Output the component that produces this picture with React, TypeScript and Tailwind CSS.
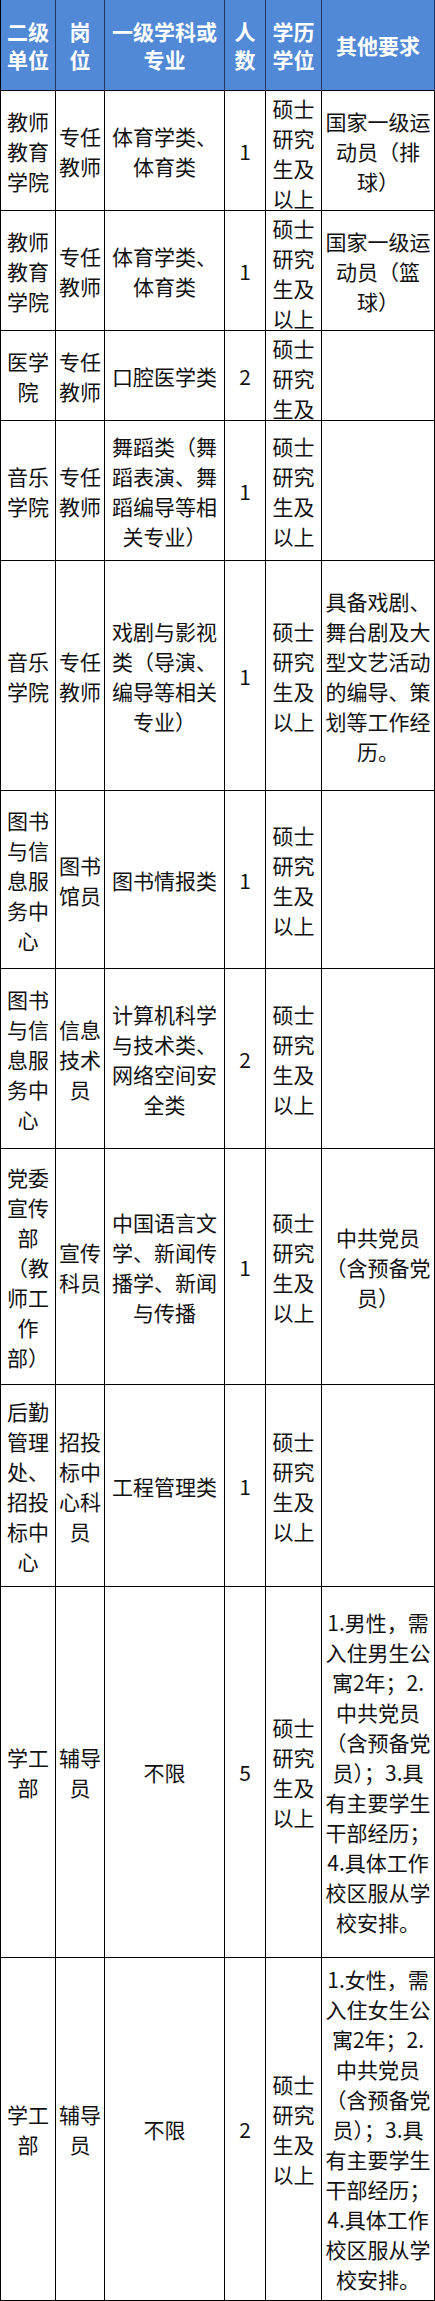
import React from 'react'

type Row = string[][]

const header: Row = [
  ['二级', '单位'],
  ['岗', '位'],
  ['一级学科或', '专业'],
  ['人', '数'],
  ['学历', '学位'],
  ['其他要求'],
]

const degree = ['硕士', '研究', '生及', '以上']

const rows: Row[] = [
  [['教师', '教育', '学院'], ['专任', '教师'], ['体育学类、', '体育类'], ['1'], degree, ['国家一级运', '动员（排', '球）']],
  [['教师', '教育', '学院'], ['专任', '教师'], ['体育学类、', '体育类'], ['1'], degree, ['国家一级运', '动员（篮', '球）']],
  [['医学', '院'], ['专任', '教师'], ['口腔医学类'], ['2'], degree, []],
  [['音乐', '学院'], ['专任', '教师'], ['舞蹈类（舞', '蹈表演、舞', '蹈编导等相', '关专业）'], ['1'], degree, []],
  [
    ['音乐', '学院'],
    ['专任', '教师'],
    ['戏剧与影视', '类（导演、', '编导等相关', '专业）'],
    ['1'],
    degree,
    ['具备戏剧、', '舞台剧及大', '型文艺活动', '的编导、策', '划等工作经', '历。'],
  ],
  [['图书', '与信', '息服', '务中', '心'], ['图书', '馆员'], ['图书情报类'], ['1'], degree, []],
  [['图书', '与信', '息服', '务中', '心'], ['信息', '技术', '员'], ['计算机科学', '与技术类、', '网络空间安', '全类'], ['2'], degree, []],
  [
    ['党委', '宣传', '部', '（教', '师工', '作', '部）'],
    ['宣传', '科员'],
    ['中国语言文', '学、新闻传', '播学、新闻', '与传播'],
    ['1'],
    degree,
    ['中共党员', '（含预备党', '员）'],
  ],
  [['后勤', '管理', '处、', '招投', '标中', '心'], ['招投', '标中', '心科', '员'], ['工程管理类'], ['1'], degree, []],
  [
    ['学工', '部'],
    ['辅导', '员'],
    ['不限'],
    ['5'],
    degree,
    ['1.男性，需', '入住男生公', '寓2年；2.', '中共党员', '（含预备党', '员）；3.具', '有主要学生', '干部经历；', '4.具体工作', '校区服从学', '校安排。'],
  ],
  [
    ['学工', '部'],
    ['辅导', '员'],
    ['不限'],
    ['2'],
    degree,
    ['1.女性，需', '入住女生公', '寓2年；2.', '中共党员', '（含预备党', '员）；3.具', '有主要学生', '干部经历；', '4.具体工作', '校区服从学', '校安排。'],
  ],
]

function Cell({ lines, head }: { lines: string[]; head?: boolean }) {
  return (
    <div
      className={`flex flex-col overflow-hidden border-r border-b py-0.5 ${
        head ? 'bg-[#5289d6] border-r-[#1f3766] border-b-black text-white font-bold leading-[28px]' : 'bg-white border-black text-[#111] leading-[30px]'
      }`}
    >
      <div className="my-auto">
        {lines.map((l, i) => (
          <div key={i} className="text-center whitespace-nowrap">
            {l}
          </div>
        ))}
      </div>
    </div>
  )
}

export default function App() {
  return (
    <div className="w-[435px] bg-white font-['Noto_Sans_CJK_SC',sans-serif] text-[21px]">
      <div className="grid grid-cols-[55px_49px_120px_41px_56px_113px] grid-rows-[91px_120px_120px_90px_140px_230px_178px_180px_236px_202px_371px_343px] border-l border-black">
        {header.map((c, i) => (
          <Cell key={`h${i}`} lines={c} head />
        ))}
        {rows.map((r, ri) => r.map((c, ci) => <Cell key={`${ri}-${ci}`} lines={c} />))}
      </div>
    </div>
  )
}
